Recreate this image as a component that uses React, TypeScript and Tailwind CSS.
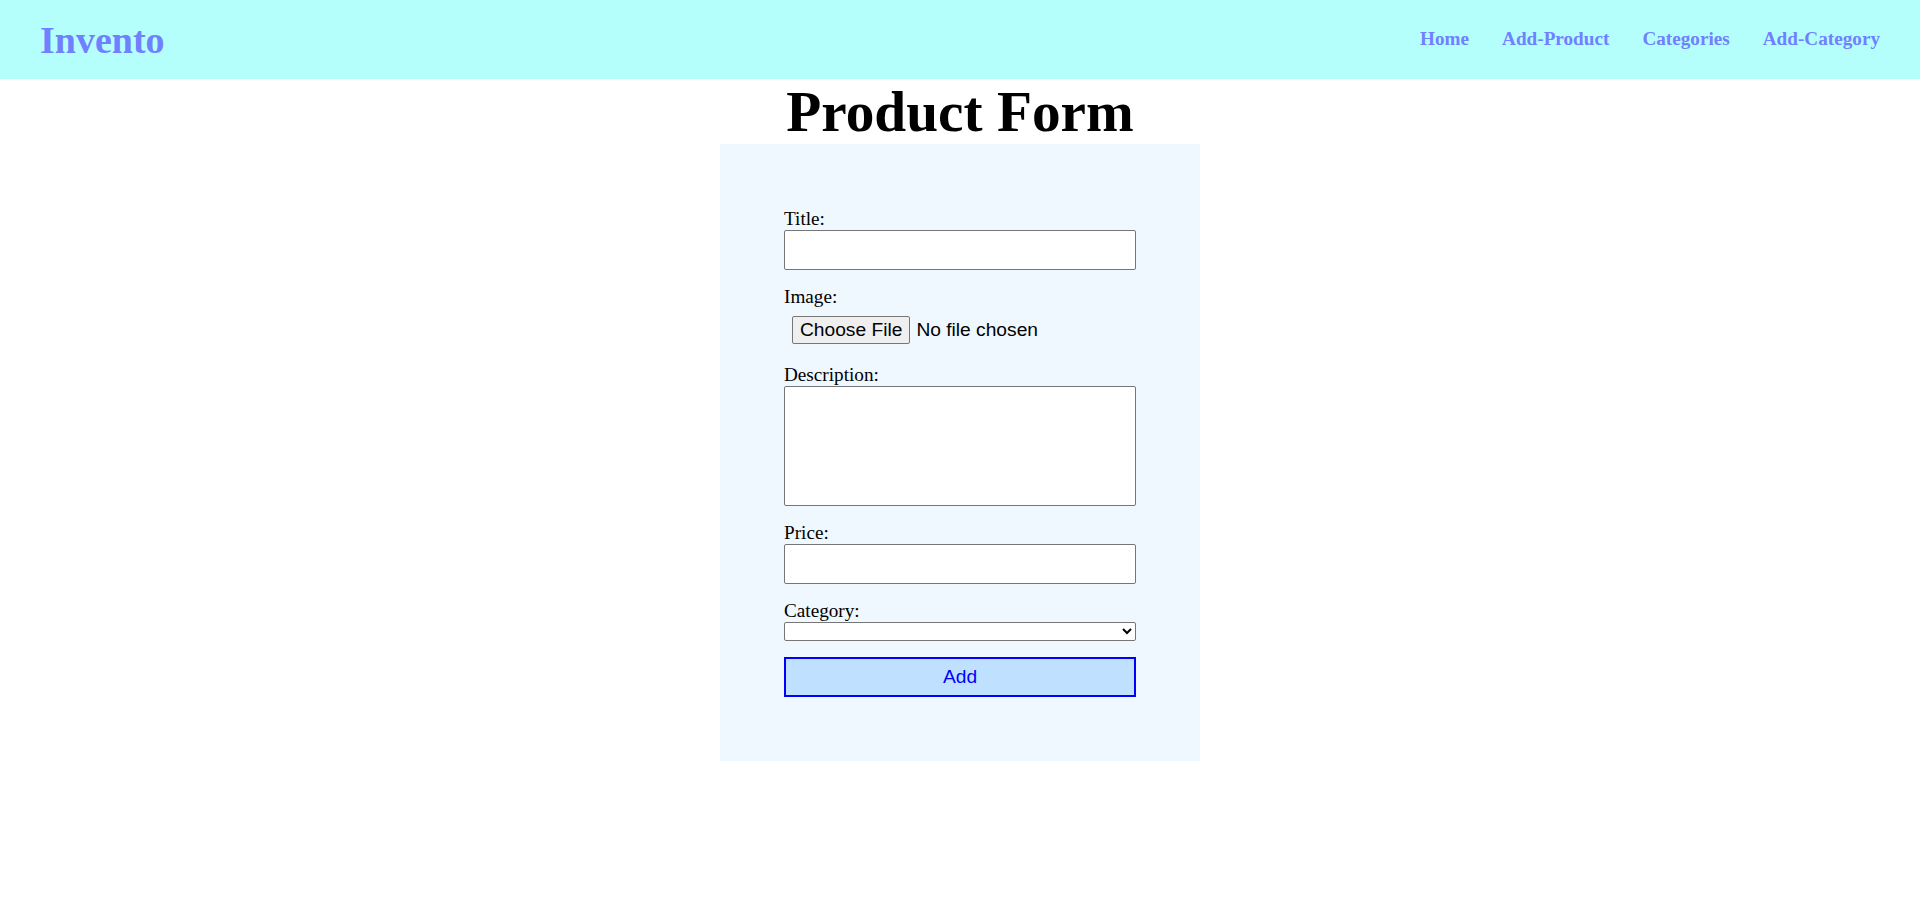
import React from "react";

const navLinks = ["Home", "Add-Product", "Categories", "Add-Category"];

function Field({ label, children }: { label: string; children: React.ReactNode }) {
  return (
    <div className="mb-4 flex flex-col">
      <label className="text-[19.2px] leading-[22px]">{label}</label>
      {children}
    </div>
  );
}

const inputClass =
  "w-full h-[40px] px-2 border border-[#767676] rounded-[2px] bg-white font-['Liberation_Sans',Arial,sans-serif] text-[19.2px]";

export default function App() {
  return (
    <div className="min-h-screen bg-white text-black font-['Liberation_Serif','Times_New_Roman',serif]">
      <header className="h-[79px] bg-[#b4fffc] flex items-center justify-between px-10">
        <div className="text-[38px] font-bold text-[#7080ff] leading-none">Invento</div>
        <nav className="flex items-center gap-[33px]">
          {navLinks.map((link) => (
            <a key={link} href="#" className="text-[19.2px] font-bold text-[#7080ff]">
              {link}
            </a>
          ))}
        </nav>
      </header>

      <h1 className="text-center text-[57.3px] font-bold leading-[65px]">Product Form</h1>

      <div className="mx-auto w-[480px] bg-[#f0f8ff] p-16">
        <form onSubmit={(e) => e.preventDefault()}>
          <Field label="Title:">
            <input type="text" className={inputClass} />
          </Field>

          <Field label="Image:">
            <input
              type="file"
              className="w-full h-[40px] p-2 font-['Liberation_Sans',Arial,sans-serif] text-[19.2px] leading-[22px] file:mr-[6px] file:px-[7px] file:py-[2px] file:border file:border-[#767676] file:rounded-[2px] file:bg-[#efefef] file:text-black"
            />
          </Field>

          <Field label="Description:">
            <textarea className="w-full h-[120px] p-2 border border-[#767676] rounded-[2px] bg-white resize-none font-['Liberation_Sans',Arial,sans-serif]" />
          </Field>

          <Field label="Price:">
            <input type="number" className={inputClass} />
          </Field>

          <Field label="Category:">
            <select className="w-full h-[19px] border border-[#767676] rounded-[2px] bg-white text-[13.33px] appearance-auto font-['Liberation_Sans',Arial,sans-serif]">
              <option value=""></option>
            </select>
          </Field>

          <button
            type="submit"
            className="w-full h-[40px] border-2 border-[#0000ff] bg-[#bfe1ff] text-[#0000ff] text-[19.2px] font-['Liberation_Sans',Arial,sans-serif]"
          >
            Add
          </button>
        </form>
      </div>
    </div>
  );
}
